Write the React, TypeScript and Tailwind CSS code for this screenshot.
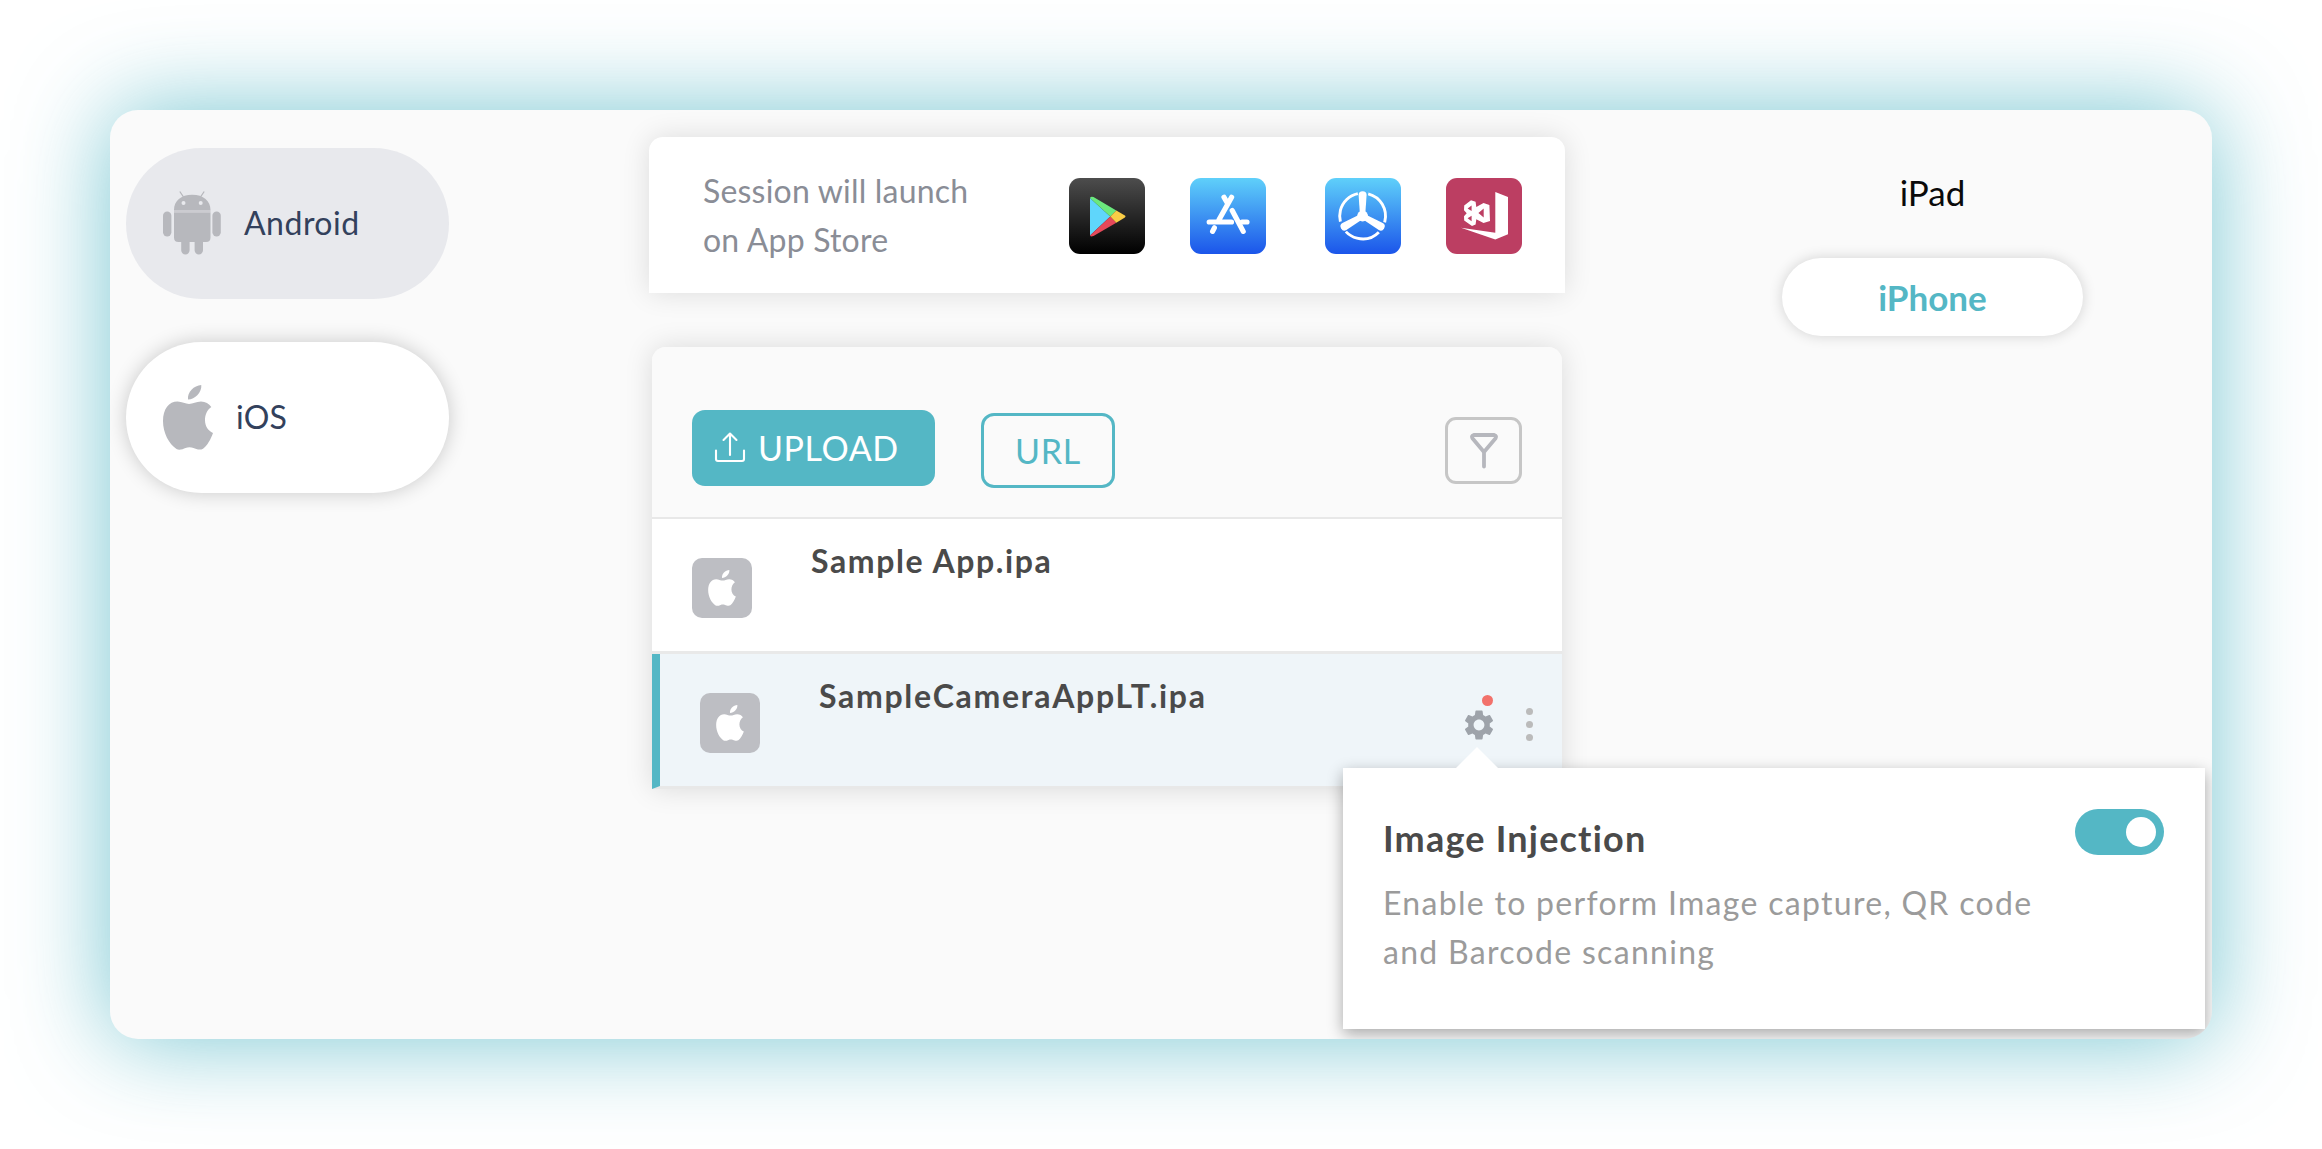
import React from 'react';
import { MdSettings } from 'react-icons/md';

function AndroidIcon() {
  return (
    <svg width="58" height="64" viewBox="0 0 58 64" fill="#b7b8bd" className="shrink-0">
      <rect x="0" y="20.5" width="8.4" height="25" rx="4.2" />
      <rect x="49.4" y="20.5" width="8.4" height="25" rx="4.2" />
      <path d="M16.8 .5 20.5 6M41.2 .5 37.5 6" stroke="#b7b8bd" strokeWidth="1.3" />
      <path fillRule="evenodd" d="M11 19C11 10 18 3.8 29.2 3.8S47.5 10 47.5 19ZM20.5 10a2 2 0 1 0 0 4 2 2 0 0 0 0-4ZM37.7 10a2 2 0 1 0 0 4 2 2 0 0 0 0-4Z" />
      <path d="M11 19H47.5V21.5H11Z" opacity=".6" />
      <path d="M11 21.5H47.5V46.5Q47.5 51 43 51H40V59.2a4.1 4.1 0 0 1-8.4 0V51H26.6V59.2a4.1 4.1 0 0 1-8.4 0V51H15.5Q11 51 11 46.5Z" />
    </svg>
  );
}

function AppleIcon({ className }: { className: string }) {
  return (
    <svg viewBox="0 0 50 65" fill="currentColor" className={className}>
      <path d="M26 19C30 19 33 16.5 38 16.5C42.5 16.5 46 18.7 48.3 22C44 25 42 30 42 35C42 41 45 45.7 50 48C48 54 44 61 40 63.7C37 65.5 33 64 30.5 63C28 62 25 62 22.5 63C20 64.2 16 65.5 13.5 64C6 59 0 48 0 36C0 24 6 16.5 14.5 16.5C19 16.5 22.5 19 26 19Z" />
      <path d="M25 14.5C24 7 31 .5 38.3 0C39 7 32 14.5 25 14.5Z" />
    </svg>
  );
}

function PlayStore() {
  return (
    <svg width="76" height="76" viewBox="0 0 76 76">
      <defs>
        <linearGradient id="play" x2="0" y2="1"><stop stopColor="#4d4d4d" /><stop offset="1" stopColor="#000" /></linearGradient>
      </defs>
      <rect width="76" height="76" rx="11" fill="url(#play)" />
      <path d="M21 20 41.3 38.5 21 57.5Z" fill="#5fd6fb" />
      <path d="M21 20Q21.5 18.3 24.5 19L47.3 32.5 41.3 38.5Z" fill="#6be87d" />
      <path d="M21 57.5Q21.5 59.2 24.5 58L47.3 44.8 41.3 38.5Z" fill="#e5495a" />
      <path d="M47.3 32.5 55.5 37.3Q57.5 38.5 55.5 39.8L47.3 44.8 41.3 38.5Z" fill="#f9cd46" />
    </svg>
  );
}

function BlueDefs({ id }: { id: string }) {
  return (
    <defs>
      <linearGradient id={id} x2="0" y2="1"><stop stopColor="#5fd0fa" /><stop offset="1" stopColor="#1b55ea" /></linearGradient>
    </defs>
  );
}

function AppStore() {
  return (
    <svg width="76" height="76" viewBox="0 0 76 76">
      <BlueDefs id="store" />
      <rect width="76" height="76" rx="11" fill="url(#store)" />
      <g stroke="#fff" strokeWidth="5.2" strokeLinecap="round">
        <path d="M41.6 19.2 29 41.8M34 19.2 37.6 25.5M24.4 49.8 22.6 53.4M19.2 44H41.5M52 44H57" />
        <path d="M42.2 32.5 53.2 53.4" />
      </g>
    </svg>
  );
}

const BLADE = 'M33.6 17Q33.6 13.2 37.6 13.2T41.6 17L40.4 34.5H34.8Z';

function TestFlight() {
  return (
    <svg width="76" height="76" viewBox="0 0 76 76">
      <BlueDefs id="flight" />
      <rect width="76" height="76" rx="11" fill="url(#flight)" />
      <circle cx="37.6" cy="38" r="22.9" fill="none" stroke="#fff" strokeWidth="2.9" strokeDasharray="36.6 11.36" transform="rotate(-75.8 37.6 38)" />
      <g fill="#fff">
        <circle cx="37.6" cy="38" r="5.4" />
        <path d={BLADE} />
        <path d={BLADE} transform="rotate(120 37.6 38)" />
        <path d={BLADE} transform="rotate(240 37.6 38)" />
      </g>
    </svg>
  );
}

function AppCenter() {
  return (
    <svg width="76" height="76" viewBox="0 0 76 76">
      <rect width="76" height="76" rx="11" fill="#bc3e62" />
      <g fill="#fff">
        <path d="M49.3 14 62 19V56.3L49.3 61.5 15 49.7 49.3 54.7Z" />
        <path fillRule="evenodd" d="M25 22.3 29.6 23.7 30.3 28.9 37.5 24.9 43.4 26.9 44 43 37.5 45 30.3 41.3 29.6 46.5 26 47.9 18.2 42.5 18 38.2 20.7 35.3 18 32.2 18.2 27.5ZM21.6 30.5 25.6 27.6V33ZM21.6 40.3 25.6 37.8V43.2ZM37.7 30.6V39.4L32.4 35Z" />
      </g>
    </svg>
  );
}

function AppBadge() {
  return (
    <div className="mt-[39px] flex h-[60px] w-[60px] shrink-0 items-center justify-center rounded-[10px] bg-[#bdbec3] text-white">
      <AppleIcon className="h-[36px] w-[28px]" />
    </div>
  );
}

export default function App() {
  return (
    <div className="h-[1149px] w-[2322px] overflow-hidden bg-white p-[110px] font-['Lato',sans-serif]">
      <div className="relative flex h-[929px] w-[2102px] overflow-hidden rounded-[28px] bg-[#fafafa] shadow-[0_0_96px_rgba(84,183,197,0.8)]">
        <nav className="ml-4 mt-[38px] flex w-[323px] flex-col gap-[43px] text-[32px] text-[#33415c]">
          <div className="flex h-[151px] items-center gap-[23px] rounded-full bg-[#e8e9ed] pb-px pl-[37px]">
            <AndroidIcon />
            <span className="tracking-[0.5px]">Android</span>
          </div>
          <div className="flex h-[151px] items-center gap-[23px] rounded-full bg-white pb-px pl-[37px] shadow-[0_0_20px_rgba(0,0,0,0.2)]">
            <AppleIcon className="h-[65px] w-[50px] shrink-0 text-[#b7b8bd]" />
            <span className="tracking-[0.3px]">iOS</span>
          </div>
        </nav>

        <main className="ml-[200px] mt-[27px] w-[916px]">
          <section className="flex h-[156px] items-center rounded-t-[14px] bg-white pl-[54px] shadow-[0_0_28px_rgba(0,0,0,0.12)]">
            <p className="w-[366px] text-[32px] leading-[49px] tracking-[0.2px] text-[#8a8d96]">
              Session will launch<br />on App Store
            </p>
            <div className="flex pt-px">
              <PlayStore />
              <div className="ml-[45px]"><AppStore /></div>
              <div className="ml-[59px]"><TestFlight /></div>
              <div className="ml-[45px]"><AppCenter /></div>
            </div>
          </section>

          <section className="ml-[3px] mt-[54px] w-[910px] rounded-t-[14px] shadow-[0_0_28px_rgba(0,0,0,0.13)]">
            <header className="flex h-[172px] items-start rounded-t-[14px] border-b-2 border-[#e8e8e8] bg-[#fafafa] pl-10 pt-[63px]">
              <button className="flex h-[76px] w-[243px] items-center rounded-[13px] bg-[#54b7c5] pb-px pl-[22px] text-[34px] tracking-[0.6px] text-white">
                <svg width="32" height="31" viewBox="0 0 32 31" fill="none" stroke="#fff" strokeWidth="2.1" strokeLinecap="round" strokeLinejoin="round" className="mr-[12px]">
                  <path d="M2 18.5V27Q2 29 4 29H28Q30 29 30 27V18.5M16 23V2M9.5 8 16 1.6 22.5 8" />
                </svg>
                UPLOAD
              </button>
              <button className="ml-[46px] mt-[3px] flex h-[75px] w-[134px] items-center justify-center rounded-[13px] border-[3px] border-[#54b7c5] text-[34px] tracking-[0.8px] text-[#54b7c5]">
                URL
              </button>
              <button className="ml-[330px] mt-[7px] flex h-[67px] w-[77px] items-center justify-center rounded-[11px] border-[3px] border-[#c6c6c6]">
                <svg width="28" height="36" viewBox="0 0 28 36" fill="none" stroke="#b6b7bd" strokeWidth="3.8" strokeLinecap="round" strokeLinejoin="round">
                  <path d="M3.6 2H24.4Q27 2.6 25.4 5.6L14 19 2.6 5.6Q1 2.6 3.6 2ZM14 19V33.5" />
                </svg>
              </button>
            </header>

            <div className="flex h-[135px] items-start border-b-[3px] border-[#e9e9e9] bg-white pl-10">
              <AppBadge />
              <span className="ml-[59px] mt-[17px] text-[32px] font-bold leading-[49px] tracking-[1.6px] text-[#4a4a4a]">Sample App.ipa</span>
            </div>

            <div className="flex h-[135px] items-start border-b-[3px] border-l-8 border-b-[#e8e8e8] border-l-[#54b7c5] bg-[#eff5f9] pl-10">
              <AppBadge />
              <span className="ml-[59px] mt-[17px] text-[32px] font-bold leading-[49px] tracking-[1.7px] text-[#4a4a4a]">SampleCameraAppLT.ipa</span>
              <div className="relative ml-auto mt-[53px] h-9 w-9 text-[#9ea3aa]">
                <MdSettings size={36} />
                <span className="absolute left-[21px] top-[-12px] h-[11px] w-[11px] rounded-full bg-[#f2716b]" />
              </div>
              <div className="ml-[29px] mr-[29px] mt-[54px] flex flex-col gap-[6px]">
                <i className="h-[7px] w-[7px] rounded-full bg-[#bbbbbb]" />
                <i className="h-[7px] w-[7px] rounded-full bg-[#bbbbbb]" />
                <i className="h-[7px] w-[7px] rounded-full bg-[#bbbbbb]" />
              </div>
            </div>
          </section>
        </main>

        <aside className="ml-[217px] mt-[54px] flex w-[301px] flex-col items-center text-[35px]">
          <span className="h-[94px] leading-[56px] text-[#0a0a0a]">iPad</span>
          <span className="flex h-[78px] w-full items-center justify-center rounded-full bg-white font-bold text-[#54b7c5] shadow-[0_0_14px_rgba(0,0,0,0.16)]">iPhone</span>
        </aside>

        <div className="absolute left-[1233px] top-[658px] flex h-[261px] w-[862px] items-start justify-between bg-white pl-10 pr-[41px] shadow-[0_5px_15px_rgba(0,0,0,0.33)]">
          <svg width="44" height="22" viewBox="0 0 44 22" className="absolute left-[112px] top-[-21px]">
            <path d="M0 22 22 0 44 22Z" fill="#fff" />
          </svg>
          <div className="pt-[43px]">
            <h2 className="text-[36px] font-bold leading-[54px] tracking-[1.2px] text-[#4a4a4a]">Image Injection</h2>
            <p className="mt-[13px] text-[32px] leading-[49px] tracking-[1.3px] text-[#9b9b9b]">
              Enable to perform Image capture, QR code<br />and Barcode scanning
            </p>
          </div>
          <div className="mt-[41px] flex h-[46px] w-[89px] items-center justify-end rounded-full bg-[#54b7c5] pr-2">
            <span className="h-[30px] w-[30px] rounded-full bg-white" />
          </div>
        </div>
      </div>
    </div>
  );
}
